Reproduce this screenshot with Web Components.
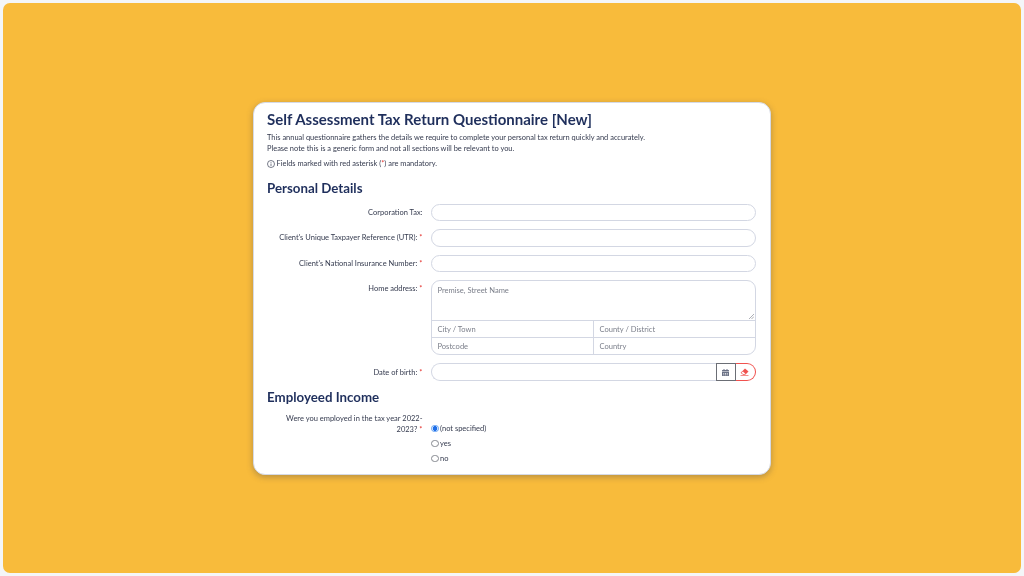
<!DOCTYPE html>
<html lang="en"><head><meta charset="utf-8"><title>Self Assessment Tax Return Questionnaire</title>
<style>
html,body{margin:0;height:576px;overflow:hidden;background:#f4f6f8}
body{font-family:Lato,"Liberation Sans",sans-serif}
</style></head><body>
<tax-page>
<form-card>
<h-title slot="head">Self Assessment Tax Return Questionnaire [New]</h-title>
<section-title>Personal Details</section-title>
<form-row label="Corporation Tax:"><text-field></text-field></form-row>
<form-row label="Client's Unique Taxpayer Reference (UTR):" req><text-field></text-field></form-row>
<form-row label="Client's National Insurance Number:" req><text-field></text-field></form-row>
<form-row label="Home address:" req><address-field></address-field></form-row>
<form-row class="date" label="Date of birth:" req><date-field></date-field></form-row>
<section-title class="next">Employeed Income</section-title>
<form-row label="Were you employed in the tax year 2022-|2023?" req tall><radio-group></radio-group></form-row>
</form-card>
</tax-page>
<script>
function def(name,html,init){customElements.define(name,class extends HTMLElement{
 constructor(){super();this.attachShadow({mode:'open'}).innerHTML=html;}
 connectedCallback(){if(init)init.call(this,this.shadowRoot);}
});}
def('tax-page',`<style>:host{display:flex;box-sizing:border-box;height:570px;margin:3px;background:#f8bb3b;border-radius:7px;align-items:flex-start;justify-content:center;padding-top:99px}</style><slot></slot>`);
def('form-card',`<style>
:host{display:block;box-sizing:border-box;width:518px;height:373px;background:#fff;border:1px solid #d5dae6;border-radius:12px;box-shadow:0 2px 6px rgba(60,60,80,.35);padding:5px 14px 0 13px;color:#343a4e}
p{margin:0;font-size:7.45px;line-height:11px;will-change:transform}
.i{margin:4px 0 10px;display:flex;align-items:center;gap:1.5px}
svg{width:8px;height:8px}
b{color:#e53935;font-weight:400}
</style><slot name="head"></slot>
<p>This annual questionnaire gathers the details we require to complete your personal tax return quickly and accurately.<br>Please note this is a generic form and not all sections will be relevant to you.</p>
<p class="i"><svg viewBox="0 0 16 16" fill="none" stroke="#3c4257" stroke-width="1.4"><circle cx="8" cy="8" r="7"/><path d="M8 7v5M8 4v1.6"/></svg><span>Fields marked with red asterisk (<b>*</b>) are mandatory.</span></p>
<slot></slot>`);
def('h-title',`<style>:host{display:block;font-size:15px;font-weight:700;line-height:22px;color:#1f2f5c;margin-bottom:2px;will-change:transform}</style><slot></slot>`);
def('section-title',`<style>:host{display:block;font-size:13.3px;font-weight:700;line-height:18px;color:#1f2f5c;margin:0 0 6.5px;will-change:transform}
:host(.next){margin-top:-1.5px;margin-bottom:7.5px}</style><slot></slot>`);
def('form-row',`<style>
:host{display:grid;grid-template-columns:155.5px 325px;column-gap:8px;margin-bottom:8px;font-size:7.5px;color:#343a4e}
.l{text-align:right;line-height:11px;padding-top:3px;will-change:transform}
.l span{display:block}
b{color:#e53935;font-weight:400;margin-left:2px}
:host([tall]) .l{padding-top:0}
:host(.date) .l{padding-top:4px}
</style><div class="l"></div><div><slot></slot></div>`,function(r){
 const l=r.querySelector('.l');
 const parts=this.getAttribute('label').split('|');
 parts.forEach(t=>{const s=document.createElement('span');s.textContent=t;l.append(s);});
 if(this.hasAttribute('req')){const b=document.createElement('b');b.textContent='*';l.lastChild.append(b);}
});
def('text-field',`<style>:host{display:block;box-sizing:border-box;height:17.5px;border:1px solid #d3d7e3;border-radius:9px;background:#fff}</style>`);
def('address-field',`<style>
:host{display:block;box-sizing:border-box;border:1px solid #d3d7e3;border-radius:9px;overflow:hidden;font-size:7.55px;color:#7b7f8a}
.a{position:relative;height:39px;padding:5px 5.5px;box-sizing:border-box;line-height:10px;will-change:transform}
.a svg{position:absolute;right:1px;bottom:1px;width:6px;height:6px}
.r{display:grid;grid-template-columns:161.5px 1fr;border-top:1px solid #d3d7e3;height:17px;box-sizing:border-box;line-height:17px}
.r span{padding-left:5.5px;will-change:transform}.r span+span{border-left:1px solid #d3d7e3}
</style><div class="a">Premise, Street Name<svg viewBox="0 0 6 6" stroke="#8a8d96" stroke-width=".7"><path d="M1 6 6 1M3.5 6 6 3.5"/></svg></div>
<div class="r"><span>City / Town</span><span>County / District</span></div>
<div class="r"><span>Postcode</span><span>Country</span></div>`);
def('date-field',`<style>
:host{display:flex;height:18px;box-sizing:border-box}
.t{flex:1;border:1px solid #d3d7e3;border-right:0;border-radius:9px 0 0 9px}
.c{width:20px;box-sizing:border-box;border:1px solid #6b6e75;display:flex;align-items:center;justify-content:center}
.e{width:20px;box-sizing:border-box;border:1px solid #f0524f;border-left:0;border-radius:0 9px 9px 0;display:flex;align-items:center;justify-content:center;padding-right:2px}
svg{width:7px;height:7px}.e svg{width:9px;height:8px}
</style><div class="t"></div><div class="c"><svg viewBox="0 0 14 14" fill="#6a7185"><path d="M3 0h2v2h4V0h2v2h2a1 1 0 0 1 1 1v2H0V3a1 1 0 0 1 1-1h2zM0 6h14v7a1 1 0 0 1-1 1H1a1 1 0 0 1-1-1z"/><path d="M2.5 8h2v1.5h-2zM6 8h2v1.5H6zM9.5 8h2v1.5h-2zM2.5 11h2v1.5h-2zM6 11h2v1.5H6zM9.5 11h2v1.5h-2z" fill="#fff"/></svg></div>
<div class="e"><svg viewBox="0 0 18 16"><path d="M10 1 17 7 11 13 H6 L1.5 9.5Z" fill="#f0524f"/><path d="M5.5 6 11 11.5 9.5 13 H6 L2.5 9.5Z" fill="#fff" stroke="#f0524f" stroke-width="1.3"/><path d="M1 15h16" stroke="#f0524f" stroke-width="1.3"/></svg></div>`);
def('radio-group',`<style>
:host{display:flex;flex-direction:column;padding-top:8px;font-size:7.5px;color:#343a4e}
label{display:flex;align-items:center;height:15px;gap:1.5px;will-change:transform}
i{box-sizing:border-box;width:7.5px;height:7.5px;border-radius:50%;border:.7px solid #85888f;background:#fff}
i.on{border:1px solid #5c9cf2;background:radial-gradient(circle,#1f6fe8 0 2.2px,#fff 2.6px)}
</style><label><i class="on"></i>(not specified)</label><label><i></i>yes</label><label><i></i>no</label>`);
</script></body></html>
